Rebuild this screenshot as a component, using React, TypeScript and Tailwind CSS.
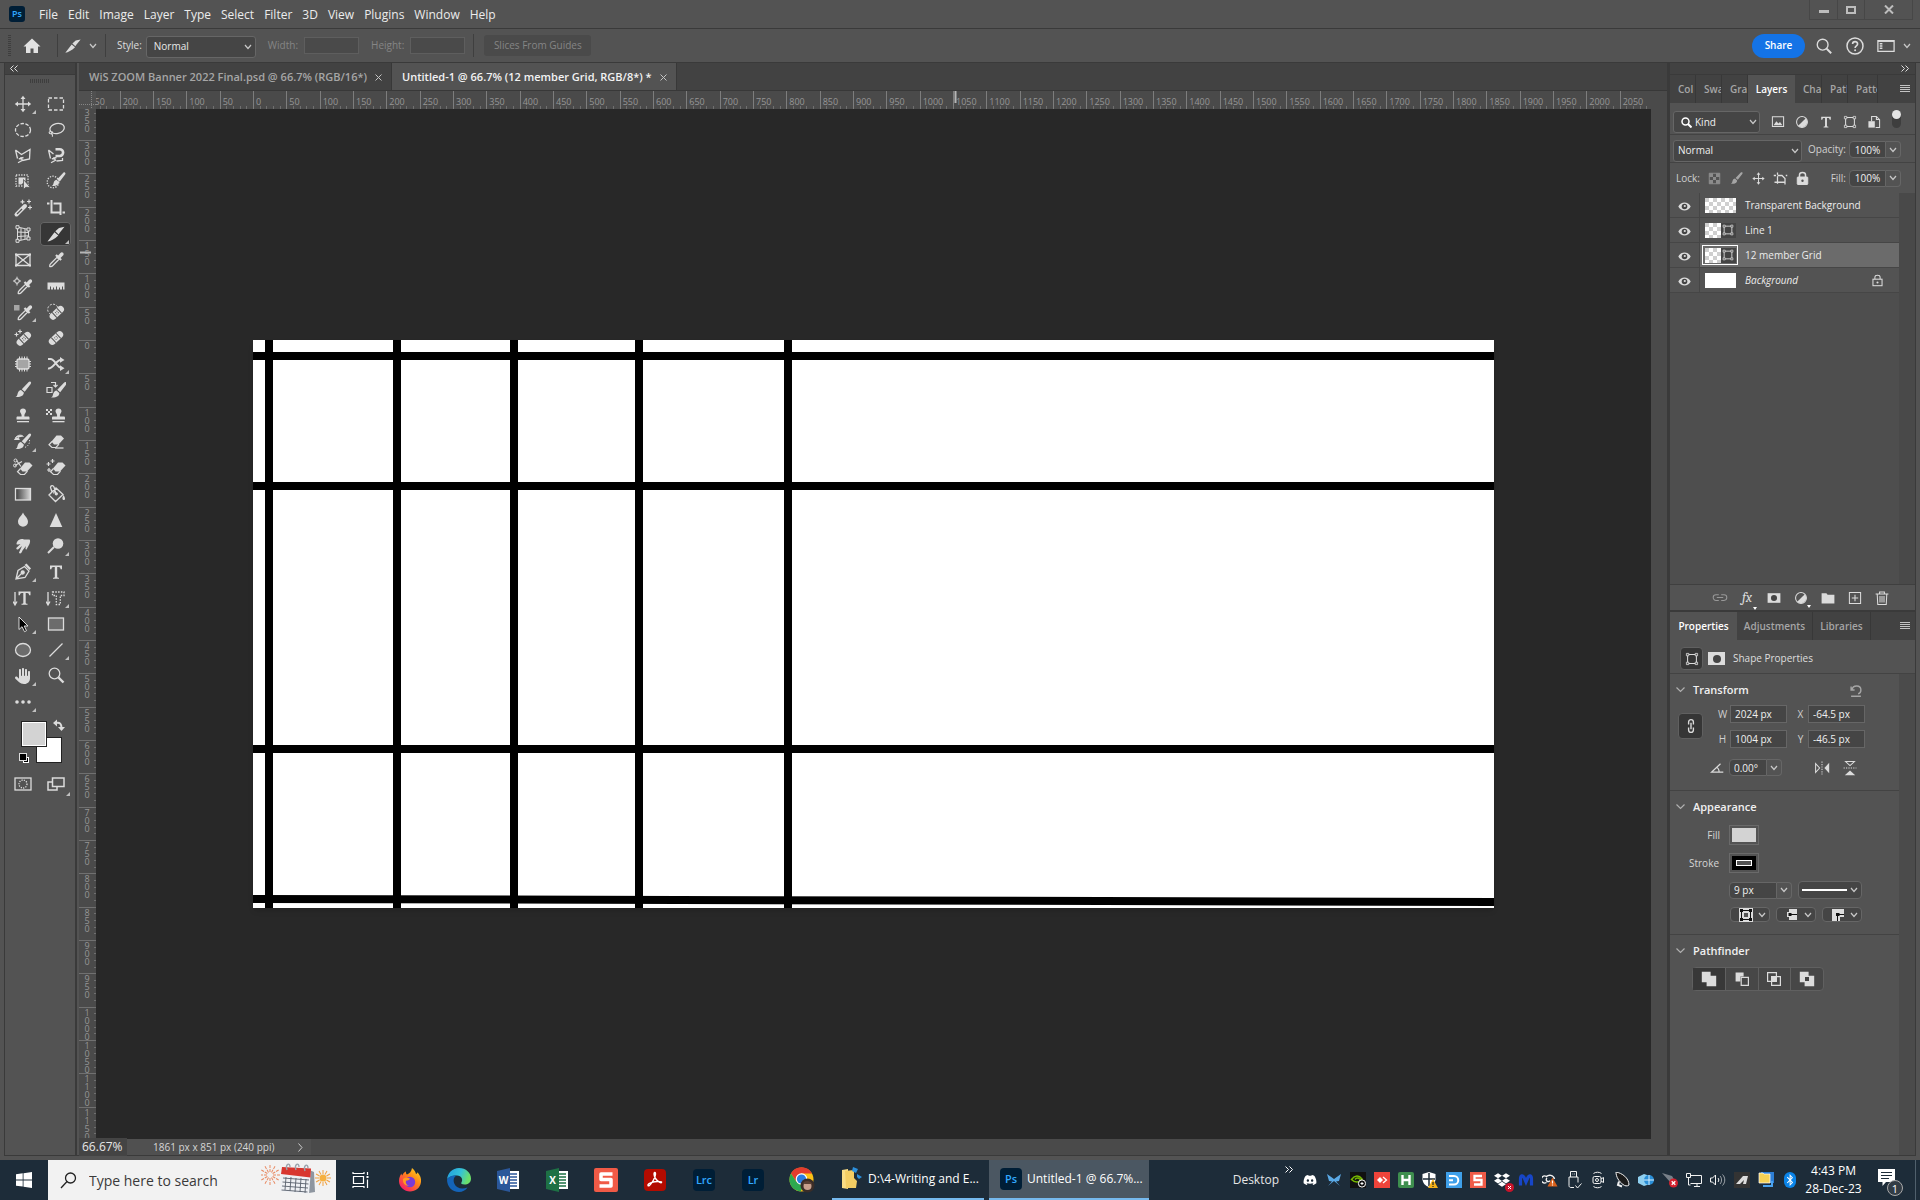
import React from "react";
import { FaBluetoothB, FaDiscord, FaDropbox, FaHand } from "react-icons/fa6";

type Kids = { children?: React.ReactNode };

const C = "#dcdcdc";

function Ic({ children, s = 20, vb = "0 0 20 20" }: Kids & { s?: number; vb?: string }) {
  return (
    <svg width={s} height={s} viewBox={vb} fill="none" stroke={C} strokeWidth="1.3" aria-hidden="true" className="shrink-0">
      {children}
    </svg>
  );
}

function Chev({ className = "" }: { className?: string }) {
  return (
    <svg width="8" height="6" viewBox="0 0 8 6" fill="none" stroke="#c8c8c8" strokeWidth="1.2" className={"shrink-0 " + className} aria-hidden="true">
      <path d="M1 1l3 3.500L7 1" />
    </svg>
  );
}

/* ---------- tool drawings ---------- */

const Brush = () => (
  <g fill={C} stroke="none">
    <path d="M17.500 1.800c.9.6.7 1.400.2 2.200l-6 7.800-2.900-2.500 6.900-7.200c.6-.6 1.200-.7 1.800-.3z" />
    <path d="M8 10l2.800 2.500c.2 3-3 4.900-8.300 4.500 2.200-1 1.700-2.900 2.500-4.600.7-1.400 1.700-2.300 3-2.400z" />
  </g>
);
const Dropper = () => (
  <g>
    <path d="M11 7.300l2 2-6.400 6.400c-.9.9-2.900 1.500-2.900.5s.3-2 .9-2.500z" />
    <path d="M9.200 5.800l1.500-1.500 1.400 1.200 2.300-2.500c1.900-1.800 4.400.6 2.600 2.600l-2.500 2.300 1.400 1.400-1.500 1.500z" fill={C} stroke="none" />
  </g>
);
const Band = () => (
  <g transform="rotate(-43 10 10)">
    <rect x="1.500" y="6.500" width="17" height="7" rx="3.500" fill={C} stroke="none" />
    <path d="M6.800 6.500v7M13.200 6.500v7" stroke="#535353" strokeWidth="1" />
    <path d="M8.700 9h.9M10.700 9h.9M8.700 11h.9M10.700 11h.9" stroke="#535353" strokeWidth="1" />
  </g>
);
const EraserG = () => (
  <g>
    <path d="M10.500 3.500h4.500l3 3-5.500 6h-4.500L5.500 9.500z" fill={C} stroke="none" />
    <path d="M6 9.500l-3 3.300 3 2.700h4l3-3.300" strokeWidth="1.200" />
  </g>
);
const Stamp = () => (
  <g fill={C} stroke="none">
    <path d="M10 2.500c1.900 0 3 1.300 3 2.800 0 1.600-1.600 2.200-1.600 4.200v1h3.800c.9 0 1.300.5 1.300 1.300v1.700h-13v-1.700c0-.8.4-1.300 1.300-1.300h3.800v-1C8.600 7.500 7 6.900 7 5.300c0-1.500 1.100-2.800 3-2.800z" />
    <rect x="4" y="15" width="12" height="1.300" />
  </g>
);
const Tee = ({ x = 0 }: { x?: number }) => (
  <path
    transform={`translate(${x} 0)`}
    d="M4 3.500h12v3.800h-1.400c-.2-1.500-.6-2.200-2-2.200h-1.400v9.600c0 .9.500 1 1.800 1.100v1H7v-1c1.300-.1 1.800-.2 1.800-1.100V5.100H7.400c-1.400 0-1.800.7-2 2.200H4z"
    fill={C}
    stroke="none"
  />
);
const LassoLines = () => <path d="M2.500 4l6 4.500 8.500-5-.5 9.500-7 1.500M2.500 4l2 8.500m3-1.200l2 3-4.500 2.500M5.800 12.800l4.700-1.300" />;
const Sparkle = ({ x, y }: { x: number; y: number }) => <path d={`M${x - 2} ${y}h4M${x} ${y - 2}v4`} strokeWidth="1.200" />;
const Slice = () => (
  <path d="M1.500 17.500L8.500 8.200l3.800 3.200C8.500 15 4.500 17 1.500 17.500zM9.300 7.200l3.700-3.200 5.500-1.200-4.800 5.900-1.100 1.700z" fill={C} stroke="none" />
);
const FrameG = () => (
  <g>
    <path d="M4.500 4.500h11v11h-11z" />
    <path d="M3 3h3v3H3zM14 3h3v3h-3zM3 14h3v3H3zM14 14h3v3h-3z" fill="#535353" strokeWidth="1" />
  </g>
);
const MoveG = () => (
  <g>
    <path d="M10 3v14M3 10h14" />
    <path d="M10 1.800L7.500 5h5zM10 18.200L7.500 15h5zM1.800 10L5 7.500v5zM18.200 10L15 7.500v5z" fill={C} stroke="none" />
  </g>
);

const tools: { n: string; d: React.ReactNode; m?: boolean; on?: boolean }[] = [
  { n: "Move", m: true, d: <MoveG /> },
  { n: "Rectangular Marquee", d: <path d="M2.500 4h15v12h-15z" strokeDasharray="3.500 2" /> },
  { n: "Elliptical Marquee", d: <ellipse cx="10" cy="10" rx="7.500" ry="6.500" strokeDasharray="3.500 1.500" /> },
  { n: "Lasso", d: <g><ellipse cx="11" cy="8.500" rx="7.300" ry="5" transform="rotate(-12 11 8)" /><path d="M4.500 11.500c-1.800 0-1.800 2.200 0 2.300 2 .1 2.600-2 1-2.200M5.500 13.800c1.500 1 1.200 2 .8 3" strokeWidth="1.100" /></g> },
  { n: "Polygonal Lasso", d: <LassoLines /> },
  { n: "Magnetic Lasso", d: <g><path d="M2.500 4l2 8.500m3-1.200l2 3-4.500 2.500M5.800 12.800l4.700-1.300M2.500 4l5 4M16.500 12v2.500l-6 .5" /><path d="M9.500 3.200h4.200a3.400 3.400 0 010 6.800H9.500" strokeWidth="2.600" /></g> },
  { n: "Object Selection", d: <g><path d="M3 3h12v11H3z" strokeDasharray="1.300 1.300" /><path d="M5.500 5.500h7v3l-4 4h-3z" fill={C} stroke="none" /><path d="M10.500 7.500v10l2.300-2.200 4.500.2z" fill={C} stroke="#535353" strokeWidth=".8" /></g> },
  { n: "Quick Selection", d: <g><circle cx="7" cy="10" r="5.800" strokeDasharray="1.300 1.300" /><g transform="translate(3.500 -1) scale(.88)"><Brush /></g></g> },
  { n: "Magic Wand", d: <g><path d="M3.500 16.500L12 8" strokeWidth="4" strokeLinecap="round" /><path d="M4 16l5-5" stroke="#535353" strokeWidth="1.300" /><Sparkle x={9.5} y={3.8} /><Sparkle x={16} y={3.5} /><Sparkle x={17} y={9.5} /></g> },
  { n: "Crop", d: <path d="M1 5.500h2.500M5.500 2v12.500H15M7.500 5.500h7V17M16.500 14.500H19" strokeWidth="2" /> },
  { n: "Perspective Crop", d: <g><path d="M4.500 3l11 2.500v9l-11 2.500zM8 4v12M12 5v10M4.500 8l11 .5M4.500 12.500l11-.7" strokeWidth="1" /><path d="M3 1.700h3v3H3zM14 4h3v3h-3zM3 15.300h3v3H3zM14 13h3v3h-3z" fill="#535353" strokeWidth="1" /></g> },
  { n: "Slice", m: true, on: true, d: <Slice /> },
  { n: "Frame", d: <g><path d="M3 4.500h14v11H3zM3 4.500l14 11M17 4.500l-14 11" /><path d="M2 3.500h2v2H2zM16 3.500h2v2h-2zM2 14.500h2v2H2zM16 14.500h2v2h-2z" fill={C} stroke="none" /></g> },
  { n: "Eyedropper", d: <Dropper /> },
  { n: "3D Material Eyedropper", d: <g><g transform="translate(1.500 1)"><Dropper /></g><circle cx="4" cy="5" r="2.300" strokeWidth="1" /><path d="M4 .7v3M4 6.500v3M0 5h2.500M5.500 5H8" strokeWidth="1" /></g> },
  { n: "Ruler", d: <path d="M1.500 6.500h17v7h-1.500v-3h-1v3h-2v-2h-1v2h-2v-3h-1v3H8v-2H7v2H5v-3H4v3H1.500z" fill={C} stroke="none" /> },
  { n: "Color Sampler", m: true, d: <g><g transform="translate(1.500 1)"><Dropper /></g><rect x="1" y="3" width="5.500" height="5.500" fill="#a5a5a5" stroke="none" /></g> },
  { n: "Spot Healing Brush", d: <g><circle cx="7" cy="7.500" r="5.300" strokeDasharray="2 1.500" strokeWidth="1" /><g transform="translate(.8 .8)"><Band /></g></g> },
  { n: "Healing Brush", d: <g><g transform="translate(.8 .8)"><Band /></g><Sparkle x={7} y={3.5} /><Sparkle x={3.5} y={6.5} /></g> },
  { n: "Bandage", d: <Band /> },
  { n: "Patch", d: <g><rect x="4" y="5" width="12" height="10" rx="2" fill="#a5a5a5" /><path d="M6.500 2.500v3M9 2.500v3M11.500 2.500v3M14 2.500v3M6.500 14.500v3M9 14.500v3M11.500 14.500v3M14 14.500v3M2 7.500h2M2 10h2M2 12.500h2M16 7.500h2M16 10h2M16 12.500h2" strokeWidth="1" /></g> },
  { n: "Content-Aware Move", m: true, d: <g><path d="M2 5h2.500c4.500 0 6.500 9 11 9h.5M2 14.500c5 1 8-8.500 12.500-8.500" strokeWidth="2" /><path d="M14 3l4.500 3-4.500 2.800zM14 11.200l4.500 3-4.500 2.800z" fill={C} stroke="none" /></g> },
  { n: "Brush", d: <Brush /> },
  { n: "Color Replacement", d: <g><g transform="translate(2.500 .5)"><Brush /></g><path d="M1 7.500h5v5H1zM5 2.500h4.500v4M7.500 5l2 2 2-2" strokeWidth="1.200" /></g> },
  { n: "Clone Stamp", d: <Stamp /> },
  { n: "Pattern Stamp", d: <g><g transform="translate(2.500 0)"><Stamp /></g><path d="M0 3h2v2H0zM4 3h2v2H4zM2 5h2v2H2zM0 7h2v2H0zM4 7h2v2H4z" fill={C} stroke="none" /></g> },
  { n: "History Brush", m: true, d: <g><Brush /><path d="M2.500 6c2-3.500 6-3.500 8-1.500M1.500 7.500h4.800l-2-3.500z" fill={C} strokeWidth="1" /><path d="M16.500 8c.5 3.500-1.500 6.500-5 7.500" strokeDasharray="1.200 1.500" strokeWidth="1" /></g> },
  { n: "Eraser", d: <g><EraserG /><path d="M9 16h8.500" /></g> },
  { n: "Background Eraser", d: <g><g transform="translate(1.500 1)"><EraserG /></g><path d="M2 7.500l7-4M3.500 2.500l4.500 6" strokeWidth="1.200" /><circle cx="2.500" cy="2.500" r="1.500" strokeWidth="1" /><circle cx="2" cy="7.500" r="1.500" strokeWidth="1" /></g> },
  { n: "Magic Eraser", d: <g><g transform="translate(1.500 1)"><EraserG /></g><Sparkle x={6.5} y={3} /><Sparkle x={2.5} y={6} /><Sparkle x={3} y={12} /></g> },
  { n: "Gradient", d: <g><defs><linearGradient id="grad"><stop stopColor="#3c3c3c" /><stop offset="1" stopColor="#d8d8d8" /></linearGradient></defs><rect x="2.500" y="4.500" width="15" height="11.500" fill="url(#grad)" /></g> },
  { n: "Paint Bucket", d: <g><path d="M3 11l7-7 7 6.500-7.500 7zM6 8L4.500 3.500c0-2 2.500-2.500 3.500-.5l2 7M10 4L7.500 9.500" /><circle cx="10.300" cy="9.800" r="1" fill={C} /><path d="M17.500 11c2.500 4 1.500 5 .2 5s-2-1.500-.2-5z" fill={C} stroke="none" /></g> },
  { n: "Blur", d: <path d="M10 2.500c1.500 3.500 5 5.500 5 9.300a5 5 0 01-10 0C5 8 8.500 6 10 2.500z" fill={C} stroke="none" /> },
  { n: "Sharpen", d: <path d="M10 3l6.300 14H3.700z" fill={C} stroke="none" /> },
  { n: "Smudge", d: <path d="M4 6c2-3 4.500-3.500 7-2.500h5.500c1 .8.600 3 0 4.500l-3 5.500c-1.500.5-1-2-.5-3.500l-3.500 4.500c-1 3.500-3 3.500-3.500 2l3-6.500-4 3.500c-1.500.3-2-.7-1.500-1.700l4-3.800-2.500.5c-1.500.2-2-.500-1-2.500z" fill={C} stroke="none" /> },
  { n: "Dodge", m: true, d: <g><circle cx="12" cy="7.500" r="5.300" fill={C} stroke="none" /><path d="M2 17l6-6" strokeWidth="2" /></g> },
  { n: "Pen", m: true, d: <g><path d="M3 17l2-8.500 6.500-4 4.500 4.500-4 6.500zM3 17l5.500-5.500" /><circle cx="9.700" cy="10.500" r="1.500" fill={C} /><path d="M11.500 3l2-1.500 4.500 5L16.500 8z" fill={C} stroke="none" /></g> },
  { n: "Horizontal Type", d: <Tee /> },
  { n: "Vertical Type", d: <g><Tee x={1.5} /><path d="M2 4v12M0 13.500L2 17l2-3.500" /></g> },
  { n: "Vertical Type Mask", m: true, d: <g><path d="M6.500 4h11.500v3.500h-3.700v9h-4v-9H6.500z" strokeDasharray="1.500 1.300" /><path d="M2 4v12M0 13.500L2 17l2-3.500" /></g> },
  { n: "Path Selection", m: true, d: <path d="M6 3v12.500l3-2.800 2.500 5 2-1-2.300-4.700H15z" fill="#000" strokeWidth="1" /> },
  { n: "Rectangle", d: <rect x="2.500" y="4" width="15" height="12" fill="#6c6c6c" /> },
  { n: "Ellipse", d: <ellipse cx="10" cy="10" rx="7.500" ry="6.500" fill="#6c6c6c" /> },
  { n: "Line", m: true, d: <path d="M3.500 16.500l13-13" /> },
  { n: "Hand", m: true, d: <FaHand x="2" y="2" width="16" height="16" color={C} stroke="none" fill={C} /> },
  { n: "Zoom", d: <g><circle cx="8.500" cy="7.500" r="5.300" /><path d="M12.500 11.500l5 5" strokeWidth="2.400" /></g> },
  { n: "Edit Toolbar", m: true, d: <g fill={C} stroke="none"><circle cx="4" cy="10" r="1.800" /><circle cx="10" cy="10" r="1.800" /><circle cx="16" cy="10" r="1.800" /></g> },
];

function Toolbar() {
  return (
    <aside className="flex w-[72px] shrink-0 flex-col border-r-2 border-[#3a3a3a] bg-[#535353]">
      <div className="flex h-[11px] items-center bg-[#424242] pl-[5px]">
        <svg width="8" height="7" viewBox="0 0 8 7" fill="none" stroke="#ddd" aria-hidden="true"><path d="M3.500.5l-3 3 3 3M7.500.5l-3 3 3 3" /></svg>
      </div>
      <div className="flex h-[17px] items-start justify-center border-t border-[#3a3a3a] pt-1">
        <svg width="20" height="4" aria-hidden="true"><path d="M0 2h20" stroke="#3e3e3e" strokeWidth="4" strokeDasharray="1 1" /></svg>
      </div>
      <div className="grid grid-cols-[33px_33px] pl-px">
        {tools.map((t) => (
          <button
            key={t.n}
            aria-label={t.n}
            className={"relative m-px flex h-6 w-[31px] items-center justify-center rounded-sm " + (t.on ? "bg-[#363636] ring-1 ring-[#656565] ring-inset" : "")}
          >
            <Ic>{t.d}</Ic>
            {t.m && <svg width="4" height="4" className="absolute right-0.5 bottom-0.5" aria-hidden="true"><path d="M4 0v4H0z" fill="#c0c0c0" /></svg>}
          </button>
        ))}
      </div>
      <svg width="48" height="50" viewBox="0 0 48 50" className="mt-1 ml-4 overflow-visible" role="img" aria-label="Foreground and background colors">
        <rect x="15.500" y="18.500" width="25" height="25" fill="#fff" stroke="#222" />
        <rect x=".5" y="2.500" width="25" height="25" fill="#222" stroke="#222" />
        <rect x="1.500" y="3.500" width="23" height="23" fill="#d3d3d3" stroke="#fff" />
        <path d="M35 4c4-1 5.500 1 5.500 5" fill="none" stroke={C} strokeWidth="2" />
        <path d="M36 .5v7L32 4zM37 8h7l-3.500 4z" fill={C} />
        <rect x="2.500" y="38.500" width="5" height="5" fill="#000" stroke="#fff" />
        <rect x="-1.500" y="34.500" width="7" height="7" fill="#000" stroke="#ddd" />
      </svg>
      <div className="mt-[3px] grid grid-cols-[33px_33px] pl-px">
        <button aria-label="Quick Mask" className="flex h-6 items-center justify-center">
          <Ic><rect x="2" y="4" width="16" height="12" /><circle cx="10" cy="10" r="4" strokeDasharray="1.200 1.200" /></Ic>
        </button>
        <button aria-label="Screen Mode" className="relative flex h-6 items-center justify-center">
          <Ic><path d="M6.500 4h11.500v8.500H6.500zM6.500 8H2v8h9v-3.500" strokeWidth="1.500" /></Ic>
          <svg width="4" height="4" className="absolute right-0.5 bottom-0" aria-hidden="true"><path d="M4 0v4H0z" fill="#c0c0c0" /></svg>
        </button>
      </div>
    </aside>
  );
}

/* ---------- top bars ---------- */

const menus = ["File", "Edit", "Image", "Layer", "Type", "Select", "Filter", "3D", "View", "Plugins", "Window", "Help"];

function MenuBar() {
  return (
    <header className="flex h-[29px] shrink-0 items-center border-b border-[#3a3a3a] bg-[#535353] pl-[9px] text-[12px] text-[#ececec]">
      <span className="mr-[9px] flex size-4 items-center justify-center rounded-[3px] bg-[#001e36] text-[9px] font-semibold text-[#31a8ff]">Ps</span>
      <nav className="flex pt-0.5">
        {menus.map((m) => (
          <button key={m} className="px-[5px]">{m}</button>
        ))}
      </nav>
      <div className="mr-[7px] ml-auto flex h-5 self-start border border-t-0 border-[#474747]">
        <button aria-label="Minimize" className="flex w-7 items-center justify-center border-r border-[#474747]"><span className="mt-1 h-[3px] w-[10px] bg-[#bdbdbd]" /></button>
        <button aria-label="Restore" className="flex w-[27px] items-center justify-center border-r border-[#474747]"><span className="h-2 w-[10px] border-2 border-[#bdbdbd]" /></button>
        <button aria-label="Close" className="flex w-[47px] items-center justify-center">
          <svg width="10" height="9" viewBox="0 0 10 9" stroke="#bdbdbd" strokeWidth="2" aria-hidden="true"><path d="M1 .5l8 8M9 .5l-8 8" /></svg>
        </button>
      </div>
    </header>
  );
}

function OptionsBar() {
  return (
    <div className="flex h-[34px] shrink-0 items-center border-b border-[#3a3a3a] bg-[#535353] pl-2 text-[10px] text-[#dedede]">
      <svg width="3" height="22" aria-hidden="true"><path d="M1.500 0v22" stroke="#3e3e3e" strokeWidth="3" strokeDasharray="1 1" /></svg>
      <button aria-label="Home" className="mr-4 ml-3">
        <svg width="18" height="16" viewBox="0 0 18 16" fill="#e2e2e2" className="block" aria-hidden="true"><path d="M9 .5L.5 8.500H3V15h4.500v-4.500h3V15H15V8.500h2.500z" /></svg>
      </button>
      <div className="h-[23px] w-px bg-[#3f3f3f]" />
      <button aria-label="Slice tool presets" className="ml-1.5 flex items-center gap-[7px]"><Ic s={18}><Slice /></Ic><Chev /></button>
      <div className="ml-2 h-[23px] w-px bg-[#3f3f3f]" />
      <label className="ml-[11px]" htmlFor="style">Style:</label>
      <div className="relative mt-0.5 ml-1">
        <select id="style" className="block h-[22px] w-[110px] appearance-none rounded-[3px] border border-[#666] bg-[#454545] pl-[7px] text-[10px] text-[#e8e8e8]"><option>Normal</option></select>
        <Chev className="absolute top-2 right-1" />
      </div>
      <label className="ml-3 text-[#858585]" htmlFor="w">Width:</label>
      <input id="w" disabled className="ml-1.5 h-[17px] w-[55px] border border-[#5e5e5e] bg-[#4a4a4a]" />
      <label className="ml-3 text-[#858585]" htmlFor="h">Height:</label>
      <input id="h" disabled className="ml-1.5 h-[17px] w-[55px] border border-[#5e5e5e] bg-[#4a4a4a]" />
      <div className="ml-2 h-[23px] w-px bg-[#3f3f3f]" />
      <button disabled className="ml-[10px] h-[21px] w-[107px] rounded-[3px] bg-[#4a4a4a] text-[#858585]">Slices From Guides</button>
      <div className="ml-auto flex items-center pr-[9px]">
        <button className="h-6 w-[53px] rounded-full bg-[#1473e6] text-[10px] font-semibold text-white">Share</button>
        <button aria-label="Search" className="ml-[10px]"><Ic s={18}><circle cx="8.500" cy="8.500" r="6" strokeWidth="1.500" /><path d="M13 13l5 5" strokeWidth="2.200" /></Ic></button>
        <button aria-label="Help" className="ml-3"><Ic s={20}><circle cx="10" cy="10" r="8" strokeWidth="1.500" /><path d="M7.600 8c0-3.200 5-3.200 5 0 0 1.800-2.500 1.900-2.500 4" strokeWidth="1.600" /><circle cx="10.100" cy="14.200" r="1" fill={C} stroke="none" /></Ic></button>
        <button aria-label="Workspace" className="ml-3 flex items-center gap-2"><Ic s={18}><path d="M1 4h18v12H1z" strokeWidth="1.400" /><path d="M1 4.500h18" strokeWidth="2" /><path d="M3 7.500h3M3 10h3M3 12.500h3" strokeWidth="1.600" /></Ic><Chev /></button>
      </div>
    </div>
  );
}

/* ---------- document ---------- */

const UNIT = 100 / 3;

function HRuler() {
  const majors = Array.from({ length: 47 }, (_, i) => i - 5);
  return (
    <svg className="h-[18px] min-w-0 flex-1" aria-label="Horizontal ruler">
      {majors.map((i) => {
        const x = 157 + i * UNIT;
        return (
          <g key={i}>
            <path d={`M${Math.round(x) + 0.5} 0v18`} stroke="#7d7d7d" />
            {[1, 2, 3, 4].map((k) => (
              <path key={k} d={`M${Math.round(x + (k * UNIT) / 5) + 0.5} 15v3`} stroke="#6f6f6f" />
            ))}
            <text x={x + 3} y="14" fill="#969696" fontSize="9">{Math.abs(i * 50)}</text>
          </g>
        );
      })}
      <path d="M859.500 0v12" stroke="#b5b5b5" strokeWidth="2" />
    </svg>
  );
}

function VRuler() {
  const majors = Array.from({ length: 31 }, (_, i) => i - 7);
  return (
    <svg className="h-full w-[17px] shrink-0 bg-[#4a4a4a]" aria-label="Vertical ruler">
      {majors.map((i) => {
        const y = 231 + i * UNIT;
        return (
          <g key={i}>
            <path d={`M0 ${Math.round(y) + 0.5}h17`} stroke="#707070" />
            {[1, 2, 3, 4].map((k) => (
              <path key={k} d={`M15 ${Math.round(y + (k * UNIT) / 5) + 0.5}h2`} stroke="#6f6f6f" />
            ))}
            {String(Math.abs(i * 50)).split("").map((ch, k) => (
              <text key={k} x="8" y={y + 9 + k * 8} textAnchor="middle" fill="#969696" fontSize="9">{ch}</text>
            ))}
          </g>
        );
      })}
      <path d="M1 143.500h11" stroke="#b5b5b5" strokeWidth="2" />
    </svg>
  );
}

function GridArt() {
  return (
    <svg width="1241" height="568" viewBox="0 0 1241 568" role="img" aria-label="12 member grid" className="shrink-0 shadow-md">
      <rect width="1241" height="568" fill="#fff" />
      {[12, 140, 257, 382, 531].map((x) => (
        <rect key={x} x={x} width="8" height="568" />
      ))}
      {[12, 142, 405].map((y) => (
        <rect key={y} y={y} width="1241" height="8" />
      ))}
      <path d="M0 555l1241 3v8L0 563z" />
    </svg>
  );
}

function Tab({ title, active }: { title: string; active?: boolean }) {
  return (
    <div className={"flex items-center border-r border-[#383838] pt-0.5 pr-[9px] pl-[10px] text-[11px] font-semibold whitespace-nowrap " + (active ? "bg-[#535353] text-[#f2f2f2]" : "text-[#a6a6a6]")}>
      <button role="tab" aria-selected={!!active}>{title}</button>
      <button aria-label={"Close " + title} className="ml-2">
        <svg width="7" height="7" viewBox="0 0 7 7" stroke="#c4c4c4" className="block" aria-hidden="true"><path d="M.5.5l6 6M6.500.5l-6 6" /></svg>
      </button>
    </div>
  );
}

function Workspace() {
  return (
    <main className="flex min-w-0 flex-1 flex-col pl-0.5">
      <div role="tablist" className="flex h-7 shrink-0 border-b border-[#383838] bg-[#424242]">
        <Tab title="WiS ZOOM Banner 2022 Final.psd @ 66.7% (RGB/16*)" />
        <Tab title="Untitled-1 @ 66.7% (12 member Grid, RGB/8*) *" active />
      </div>
      <div className="flex h-[18px] shrink-0 bg-[#4a4a4a]">
        <svg width="17" height="18" aria-hidden="true" className="shrink-0 bg-[#505050]"><path d="M12.500 0v18M0 13.500h17" stroke="#858585" strokeDasharray="1 1" /></svg>
        <HRuler />
      </div>
      <div className="flex min-h-0 flex-1">
        <VRuler />
        <div className="flex min-w-0 flex-1 items-center justify-center overflow-hidden bg-[#282828]"><GridArt /></div>
        <div className="w-4 shrink-0 bg-[#4a4a4a]" />
      </div>
      <div className="flex h-4 shrink-0 items-center bg-[#4a4a4a] text-[10px] text-[#d6d6d6]">
        <span className="w-12 bg-[#444] pl-[3px] text-[12px] leading-[18px] text-[#e8e8e8]">66.67%</span>
        <span className="flex h-4 flex-1 grow-0 basis-[184px] items-center justify-between bg-[#505050] pt-px pr-2 pl-[26px] whitespace-nowrap">
          1861 px x 851 px (240 ppi)
          <svg width="5" height="9" viewBox="0 0 5 9" fill="none" stroke="#ccc" aria-hidden="true"><path d="M.5.5l3.500 4-3.500 4" /></svg>
        </span>
      </div>
    </main>
  );
}

/* ---------- right panels ---------- */

const Burger = () => (
  <svg width="10" height="8" stroke="#c4c4c4" aria-hidden="true"><path d="M0 .5h10M0 2.500h10M0 4.500h10M0 6.500h10" /></svg>
);

const Half = () => (
  <g><circle cx="10" cy="10" r="6.800" /><path d="M14.800 5.200A6.800 6.800 0 015.200 14.800z" fill={C} stroke="none" /></g>
);

const Checker = ({ w }: { w: number }) => (
  <svg width={w} height="15" className="bg-white" aria-hidden="true">
    <defs><pattern id="chk" width="8" height="8" patternUnits="userSpaceOnUse"><path d="M0 0h4v4H0zM4 4h4v4H4z" fill="#cfcfcf" /></pattern></defs>
    <rect width={w} height="15" fill="url(#chk)" />
  </svg>
);

const layers = [
  { n: "Transparent Background", k: "clear" },
  { n: "Line 1", k: "shape" },
  { n: "12 member Grid", k: "shape", on: true },
  { n: "Background", k: "white" },
];

function NumberBox({ label, value, id }: { label: string; value: string; id: string }) {
  return (
    <div className="flex items-center">
      <label htmlFor={id} className="mr-[3px] text-[#d0d0d0]">{label}</label>
      <input id={id} defaultValue={value} className="h-[17px] w-[37px] rounded-l-sm border border-[#666] bg-[#454545] text-center text-[#f0f0f0]" />
      <button aria-label={label + " slider"} className="flex h-[17px] w-[15px] items-center justify-center rounded-r-sm border border-l-0 border-[#666]"><Chev /></button>
    </div>
  );
}

const hiddenTab = "overflow-hidden border-r border-[#383838] pl-2 text-left ";

function LayersPanel() {
  return (
    <section className="flex h-[536px] shrink-0 flex-col text-[10px]">
      <div role="tablist" className="flex h-[29px] border-t border-[#3a3a3a] bg-[#424242] font-semibold text-[#a6a6a6]">
        <button role="tab" aria-label="Color" aria-selected="false" className={hiddenTab + "w-[26px]"}>Col</button>
        <button role="tab" aria-label="Swatches" aria-selected="false" className={hiddenTab + "w-[26px]"}>Swa</button>
        <button role="tab" aria-label="Gradients" aria-selected="false" className={hiddenTab + "w-[26px]"}>Gra</button>
        <button role="tab" aria-selected="true" className="w-[47px] bg-[#535353] text-white">Layers</button>
        <button role="tab" aria-label="Channels" aria-selected="false" className={hiddenTab + "w-[27px]"}>Cha</button>
        <button role="tab" aria-label="Paths" aria-selected="false" className={hiddenTab + "w-[26px]"}>Path</button>
        <button role="tab" aria-label="Patterns" aria-selected="false" className={hiddenTab + "w-[30px]"}>Patte</button>
        <button aria-label="Panel menu" className="mr-[5px] ml-auto"><Burger /></button>
      </div>
      <div className="flex h-8 items-end border-b border-[#434343] pb-px pl-[3px]">
        <div className="relative">
          <select aria-label="Filter by kind" className="block h-[22px] w-[87px] appearance-none rounded-[3px] border border-[#666] bg-[#454545] pl-[21px] text-[10px] text-[#f0f0f0]"><option>Kind</option></select>
          <svg width="11" height="11" viewBox="0 0 11 11" fill="none" stroke="#fff" strokeWidth="1.500" className="absolute top-1.5 left-2" aria-hidden="true"><circle cx="4.500" cy="4.500" r="3.500" /><path d="M7 7l3.500 3.500" strokeWidth="2" /></svg>
          <Chev className="absolute top-2 right-[3px]" />
        </div>
        <div className="mb-[3px] ml-[10px] flex items-center gap-2">
          <button aria-label="Pixel layers"><Ic s={16}><path d="M3 3.500h14v12H3z" /><path d="M4.500 14l3.500-5 2.500 3 2-2 3 4z" fill={C} stroke="none" /></Ic></button>
          <button aria-label="Adjustment layers"><Ic s={16}><Half /></Ic></button>
          <button aria-label="Type layers"><Ic s={16}><Tee /></Ic></button>
          <button aria-label="Shape layers"><Ic s={16}><FrameG /></Ic></button>
          <button aria-label="Smart objects"><Ic s={16}><path d="M7 9V3h6l4 4v10h-5M13 3v4h4" /><path d="M3 9h8v8H3z" fill={C} stroke="none" /></Ic></button>
          <button aria-label="Filter on" className="-mt-1.5 ml-0.5 flex h-[18px] w-[9px] items-start rounded-full bg-[#3e3e3e]"><span className="size-[9px] rounded-full bg-[#e4e4e4]" /></button>
        </div>
      </div>
      <div className="flex h-7 items-center border-b border-[#434343] pl-[3px]">
        <div className="relative mt-1 mr-auto">
          <select aria-label="Blend mode" className="block h-[22px] w-[129px] appearance-none rounded-[3px] border border-[#666] bg-[#454545] pl-1 text-[10px] text-[#f0f0f0]"><option>Normal</option></select>
          <Chev className="absolute top-2 right-[3px]" />
        </div>
        <div className="mt-0.5 mr-[14px]"><NumberBox id="opacity" label="Opacity:" value="100%" /></div>
      </div>
      <div className="flex h-[30px] items-center pl-1.5 text-[#d0d0d0]">
        <span>Lock:</span>
        <div className="ml-[7px] flex items-center gap-[7px]">
          <button aria-label="Lock transparency"><Ic s={15}><path d="M3 3h14v14H3z" stroke="#8c8c8c" /><path d="M3 3h5v5H3zM12 3h5v5h-5zM8 8h4v4H8zM3 12h5v5H3zM12 12h5v5h-5z" fill="#8c8c8c" stroke="none" /></Ic></button>
          <button aria-label="Lock pixels" className="opacity-60"><Ic s={15}><Brush /></Ic></button>
          <button aria-label="Lock position"><Ic s={15}><MoveG /></Ic></button>
          <button aria-label="Lock artboard"><Ic s={15}><path d="M1 6h3M6 2v3M6 7v10M2 15h14M6 6h6l4 4v8M17 6h2" strokeWidth="1.700" /></Ic></button>
          <button aria-label="Lock all"><Ic s={15}><rect x="3" y="8" width="14" height="10" rx="1" fill={C} /><path d="M6 8V5c0-4 8-4 8 0v3" strokeWidth="2" /><circle cx="10" cy="13" r="1.600" fill="#535353" stroke="none" /></Ic></button>
        </div>
        <div className="mr-[14px] ml-auto"><NumberBox id="fillop" label="Fill:" value="100%" /></div>
      </div>
      <div className="flex min-h-0 flex-1 bg-[#4e4e4e]">
        <ul className="min-w-0 flex-1">
          {layers.map((l) => (
            <li key={l.n} className="flex h-[25px] border-b border-[#464646] bg-[#535353]">
              <button aria-label={"Toggle " + l.n} className="flex w-[30px] items-center justify-center border-r border-[#464646] pt-0.5">
                <svg width="13" height="9" viewBox="0 0 13 9" aria-hidden="true"><path d="M.3 4.500C3-.8 10-.8 12.700 4.500 10 9.800 3 9.800.3 4.500z" fill={C} /><circle cx="6.500" cy="4.500" r="2.800" fill="#444" /><circle cx="6.800" cy="4" r="1.100" fill={C} /></svg>
              </button>
              <button className={"flex min-w-0 flex-1 items-center pr-[15px] pl-[2px] text-[#ececec] " + (l.on ? "bg-[#6b6b6b]" : "")}>
                <span className={"flex h-5 w-9 shrink-0 items-center justify-center " + (l.on ? "border border-white" : "")}>
                  {l.k === "clear" && <Checker w={31} />}
                  {l.k === "white" && <span className="h-[15px] w-[31px] bg-white" />}
                  {l.k === "shape" && (
                    <>
                      <Checker w={16} />
                      <span className="flex h-[15px] w-[15px] items-center justify-center bg-[#444]"><Ic s={14}><FrameG /></Ic></span>
                    </>
                  )}
                </span>
                <span className={"ml-[7px] whitespace-nowrap " + (l.k === "white" ? "italic" : "")}>{l.n}</span>
                {l.k === "white" && <span className="ml-auto"><Ic s={13}><rect x="3" y="8" width="14" height="10" strokeWidth="1.600" /><path d="M6 8V5c0-4 8-4 8 0v3" strokeWidth="1.600" /><circle cx="10" cy="13" r="1.600" fill={C} stroke="none" /></Ic></span>}
              </button>
            </li>
          ))}
        </ul>
        <div className="w-4 bg-[#494949]" />
      </div>
      <div className="flex h-[26px] items-center justify-end gap-[11px] border-t border-[#3f3f3f] bg-[#535353] pr-[25px]">
        <button aria-label="Link layers" className="opacity-50"><Ic s={16}><path d="M8.500 13H5a3.500 3.500 0 010-7h3.500M11.500 6H15a3.500 3.500 0 010 7h-3.500M6 9.500h8" /></Ic></button>
        <button aria-label="Layer style" className="relative w-4 font-serif text-[14px] leading-4 text-[#dcdcdc] italic">
          fx
          <svg width="4" height="3" className="absolute -right-0.5 -bottom-1" aria-hidden="true"><path d="M0 0h4L2 3z" fill="#fff" /></svg>
        </button>
        <button aria-label="Add mask"><Ic s={16}><rect x="2" y="4" width="16" height="12" fill={C} stroke="none" /><circle cx="10" cy="10" r="3.800" fill="#444" stroke="none" /></Ic></button>
        <button aria-label="New adjustment" className="relative">
          <Ic s={16}><Half /></Ic>
          <svg width="4" height="3" className="absolute -right-0.5 -bottom-0.5" aria-hidden="true"><path d="M0 0h4L2 3z" fill="#fff" /></svg>
        </button>
        <button aria-label="New group"><Ic s={16}><path d="M2 4h6l1.500 2H18v11H2z" fill={C} stroke="none" /></Ic></button>
        <button aria-label="New layer"><Ic s={16}><path d="M3 3h14v14H3zM10 6v8M6 10h8" /></Ic></button>
        <button aria-label="Delete layer"><Ic s={16}><path d="M2 5h16M7 5V2.500h6V5M4 5l.7 13h10.600L16 5M7.500 7.500v8M10 7.500v8M12.500 7.500v8" /></Ic></button>
      </div>
    </section>
  );
}

function Heading({ children }: Kids) {
  return (
    <button className="flex items-center gap-2 text-[11px] font-semibold text-[#f0f0f0]">
      <svg width="9" height="6" viewBox="0 0 9 6" fill="none" stroke="#b0b0b0" strokeWidth="1.200" aria-hidden="true"><path d="M.5.5l4 4 4-4" /></svg>
      {children}
    </button>
  );
}

function Field({ id, label, value }: { id: string; label: string; value: string }) {
  return (
    <div className="flex items-center">
      <label htmlFor={id} className="w-[15px] text-center text-[#cfcfcf]">{label}</label>
      <input id={id} defaultValue={value} className="h-[18px] w-[57px] border border-[#666] bg-[#454545] pl-1 text-[#f0f0f0]" />
    </div>
  );
}

function PropertiesPanel() {
  return (
    <section className="flex min-h-0 flex-1 flex-col border-t-2 border-[#3a3a3a] bg-[#535353] text-[10px]">
      <div role="tablist" className="flex h-7 shrink-0 bg-[#424242] font-semibold text-[#a6a6a6]">
        <button role="tab" aria-selected="true" className="w-[67px] bg-[#535353] text-white">Properties</button>
        <button role="tab" aria-selected="false" className="w-[76px] border-r border-[#383838]">Adjustments</button>
        <button role="tab" aria-selected="false" className="w-[58px] border-r border-[#383838]">Libraries</button>
        <button aria-label="Panel menu" className="mr-[5px] ml-auto"><Burger /></button>
      </div>
      <div className="flex h-[34px] shrink-0 items-center border-b border-[#434343] pt-1 pl-[10px] text-[#dedede]">
        <span className="flex size-[23px] items-center justify-center rounded-sm border border-[#606060] bg-[#363636]"><Ic s={16}><FrameG /></Ic></span>
        <span className="ml-[5px] flex h-[13px] w-[17px] items-center justify-center bg-[#dcdcdc]"><span className="size-2 rounded-full bg-[#444]" /></span>
        <span className="ml-2">Shape Properties</span>
      </div>
      <div className="flex min-h-0 flex-1">
        <div className="min-w-0 flex-1">
          <div className="h-[117px] border-b border-[#434343] pt-2 pl-1.5">
            <div className="flex h-4 items-center justify-between pr-9">
              <Heading>Transform</Heading>
              <button aria-label="Reset transform" className="opacity-60"><Ic s={14}><path d="M3 5v5h5M4 10c2-8 13-7 13 0 0 3-2 5-4 5.500M3 19h14" strokeWidth="2" /></Ic></button>
            </div>
            <div className="mt-[7px] flex">
              <button aria-label="Link width and height" className="mt-2 mr-3 ml-[2px] flex h-[26px] w-[25px] items-center justify-center rounded-sm border border-[#606060] bg-[#363636]">
                <Ic s={16}><path d="M7 8V5c0-4 6-4 6 0v3M7 12v3c0 4 6 4 6 0v-3M10 6v8" strokeWidth="1.700" /></Ic>
              </button>
              <div className="grid grid-cols-[72px_72px] gap-x-1.5 gap-y-[7px]">
                <Field id="pw" label="W" value="2024 px" />
                <Field id="px" label="X" value="-64.5 px" />
                <Field id="ph" label="H" value="1004 px" />
                <Field id="py" label="Y" value="-46.5 px" />
              </div>
            </div>
            <div className="mt-[11px] flex items-center pl-[34px]">
              <Ic s={14}><path d="M19 16H2L15 4M9 9c3 1 4 4 4 7" strokeWidth="1.700" /></Ic>
              <input aria-label="Angle" defaultValue="0.00°" className="ml-[5px] h-[17px] w-[38px] rounded-l-sm border border-[#666] bg-[#454545] pl-1 text-[#f0f0f0]" />
              <button aria-label="Angle presets" className="flex h-[17px] w-[15px] items-center justify-center rounded-r-sm border border-l-0 border-[#666]"><Chev /></button>
              <button aria-label="Flip horizontal" className="ml-8"><Ic s={16}><path d="M2 4.500v11L7 10z" /><path d="M19 3.500v13L13 10z" fill={C} stroke="none" /><path d="M10 2v16" strokeDasharray="1.500 1.500" /></Ic></button>
              <button aria-label="Flip vertical" className="ml-3"><Ic s={16}><path d="M4.500 2h11L10 7z" /><path d="M3.500 19h13L10 13z" fill={C} stroke="none" /><path d="M2 10h16" strokeDasharray="1.500 1.500" /></Ic></button>
            </div>
          </div>
          <div className="h-36 border-b border-[#434343] pt-2 pl-1.5 text-[#d6d6d6]">
            <div className="flex h-4 items-center"><Heading>Appearance</Heading></div>
            <div className="mt-[10px] grid grid-cols-[44px_1fr] gap-x-[9px] gap-y-2">
              <span className="self-center text-right">Fill</span>
              <button aria-label="Fill color" className="flex h-5 w-[30px] items-center justify-center border border-[#6a6a6a]"><span className="h-[14px] w-6 bg-[#d3d3d3]" /></button>
              <span className="self-center justify-self-center whitespace-nowrap pl-3">Stroke</span>
              <button aria-label="Stroke color" className="flex h-5 w-[30px] items-center justify-center border border-[#6a6a6a]"><span className="flex h-[14px] w-6 items-center justify-center bg-black"><span className="h-[6px] w-4 border border-white bg-[#535353]" /></span></button>
            </div>
            <div className="mt-2 flex items-center pl-[53px]">
              <input aria-label="Stroke width" defaultValue="9 px" className="h-[17px] w-[48px] rounded-l-sm border border-[#666] bg-[#454545] pl-1 text-[#f0f0f0]" />
              <button aria-label="Stroke width presets" className="flex h-[17px] w-[15px] items-center justify-center rounded-r-sm border border-l-0 border-[#666]"><Chev /></button>
              <button aria-label="Stroke type" className="ml-1.5 flex h-[18px] w-16 items-center justify-between rounded-sm border border-[#666] bg-[#454545] px-[3px]"><span className="h-0.5 w-[45px] bg-white" /><Chev /></button>
            </div>
            <div className="mt-2 flex gap-1.5 pl-[54px]">
              <button aria-label="Stroke alignment" className="flex h-[15px] w-10 items-center justify-between rounded-sm border border-[#666] bg-[#454545] pr-[3px] pl-2">
                <svg width="14" height="14" aria-hidden="true"><rect width="14" height="14" fill={C} /><path d="M2.500 2.500h9v9h-9z" fill="none" stroke="#111" /><path d="M1 1h3v3H1zM10 1h3v3h-3zM1 10h3v3H1zM10 10h3v3h-3z" fill="#111" /><rect x="5" y="5" width="4" height="4" fill="#555" /></svg>
                <Chev />
              </button>
              <button aria-label="Stroke cap" className="flex h-[15px] w-10 items-center justify-between rounded-sm border border-[#666] bg-[#454545] pr-[3px] pl-[10px]">
                <svg width="10" height="11" aria-hidden="true"><path d="M2 0h8v11H2V8H0V3h2z" fill={C} /><path d="M1.500 4h3v3h-3zM4 5h6v1H4z" fill="#111" /></svg>
                <Chev />
              </button>
              <button aria-label="Stroke corners" className="flex h-[15px] w-10 items-center justify-between rounded-sm border border-[#666] bg-[#454545] pr-[3px] pl-[9px]">
                <svg width="12" height="12" aria-hidden="true"><path d="M0 0h12v8H8v4H0z" fill={C} /><path d="M4 4h3.500v3H4zM7 5h5v1H7zM5 7h1v5H5z" fill="#111" /></svg>
                <Chev />
              </button>
            </div>
          </div>
          <div className="pt-2 pl-1.5">
            <div className="flex h-4 items-center"><Heading>Pathfinder</Heading></div>
            <div className="mt-2 ml-4 flex h-6 w-[132px] divide-x divide-[#606060] rounded-sm border border-[#606060] bg-[#474747]">
              <button aria-label="Unite" className="flex flex-1 items-center justify-center bg-[#383838]"><Ic s={16}><path d="M1 1h11v5h7v13H7v-5H1z" fill={C} stroke="none" /></Ic></button>
              <button aria-label="Subtract" className="flex flex-1 items-center justify-center"><Ic s={16}><path d="M2 2h10v5H8v6H2z" fill={C} stroke="none" /><path d="M9 8h9v10H9z" strokeWidth="1.500" /></Ic></button>
              <button aria-label="Intersect" className="flex flex-1 items-center justify-center"><Ic s={16}><path d="M2 2h11v11H2zM7 7h11v11H7z" strokeWidth="1.500" /><path d="M7.500 7.500h5v5h-5z" fill={C} stroke="none" /></Ic></button>
              <button aria-label="Exclude" className="flex flex-1 items-center justify-center"><Ic s={16}><path d="M1 1h11v5h7v13H7v-5H1z" fill={C} stroke="none" /><path d="M7.500 7.500h5v5h-5z" fill="#444" stroke="none" /></Ic></button>
            </div>
          </div>
        </div>
        <div className="w-4 bg-[#4b4b4b]" />
      </div>
    </section>
  );
}

/* ---------- taskbar ---------- */

function AppTile({ bg, fg, children }: Kids & { bg: string; fg: string }) {
  return <span className={"flex size-[22px] items-center justify-center rounded-[4px] text-[11px] font-semibold " + bg + " " + fg}>{children}</span>;
}

function Firefox() {
  return (
    <svg width="24" height="24" viewBox="0 0 24 24" aria-hidden="true">
      <defs><linearGradient id="ff" x1="1" y1="0" x2=".2" y2="1"><stop stopColor="#ffe226" /><stop offset=".45" stopColor="#ff8a16" /><stop offset="1" stopColor="#f5156c" /></linearGradient></defs>
      <path d="M14 0c2.500 2 3.500 4 4 6 1-.3 1.300-1 1.500-1.800C22 7 23.500 10 23 14c-.8 6-5.500 9.500-11 9.500S1 19 1 13c0-3 1-5.500 2.500-7.500 0 1 .3 1.500.8 2C5 5.500 6.500 4 8 3.500c-.3 1.200.2 2.300 1 3 2.500-1 4.500-3 5-6.500z" fill="url(#ff)" />
      <circle cx="12" cy="14" r="5.200" fill="#7a3bd6" /><path d="M5 11c2-2 5-1.500 7-.5-1 2-2.500 2-4 2.200-.8 1.800.5 4.300 3 5-4 .5-6.500-2.700-6-6.700z" fill="#ff9a1f" />
    </svg>
  );
}

function Edge() {
  return (
    <svg width="24" height="24" viewBox="0 0 24 24" aria-hidden="true">
      <defs><linearGradient id="ed" x1="0" y1="0" x2="1" y2=".3"><stop stopColor="#1f9de0" /><stop offset=".6" stopColor="#35c1d8" /><stop offset="1" stopColor="#6be06a" /></linearGradient></defs>
      <path d="M0 11.500C.6 5 5.500 0 12 0c7 0 12 5 12 10.500 0 4-3 6-6.500 6-2.500 0-4-1-3-2.300 1.700-2.200.2-6.700-4.500-6.700C5.500 7.500 1.500 9 0 11.500z" fill="url(#ed)" />
      <path d="M0 11.500C2 8 6 7 9.500 7.600 6.500 9 6 13 7.500 16c2 4 7 6 13 3.500-2 2.800-5 4.500-8.500 4.500C5 24 0 18.500 0 11.500z" fill="#1464b8" />
    </svg>
  );
}

function OfficeTile({ c, l }: { c: string; l: string }) {
  return (
    <svg width="24" height="24" viewBox="0 0 24 24" aria-hidden="true">
      <path d="M12 3h11v18H12z" fill="#fff" /><path d="M14 6h7M14 9h7M14 12h7M14 15h7M14 18h7" stroke={c} strokeWidth="1.500" />
      <path d="M1 3l13-3v24L1 21z" fill={c} />
      <text x="7.500" y="16" textAnchor="middle" fill="#fff" fontSize="10" fontWeight="700">{l}</text>
    </svg>
  );
}

function Chrome() {
  return (
    <svg width="26" height="26" viewBox="0 0 26 26" aria-hidden="true">
      <circle cx="12.500" cy="12.500" r="12" fill="#fbc116" />
      <path d="M2 6.500a12 12 0 0121 0H12.500L7.500 15z" fill="#e33b2e" />
      <path d="M2 6.500a12 12 0 009.500 18l5-9-9-.5z" fill="#2da94f" />
      <circle cx="12.500" cy="12" r="5.800" fill="#fff" /><circle cx="12.500" cy="12" r="4.600" fill="#2a7de1" />
      <circle cx="18.500" cy="18.500" r="7" fill="#3a2d28" /><circle cx="18.500" cy="19" r="4" fill="#c79f8c" /><path d="M13.500 16.500c3-4 8-3 10 1-3-1-7 0-10-1z" fill="#5b4034" />
    </svg>
  );
}

const calendarRays = Array.from({ length: 12 }, (_, i) => i * 30);

function SearchArt() {
  return (
    <svg width="70" height="36" viewBox="0 0 70 36" aria-hidden="true" className="shrink-0">
      <g stroke="#e88a63">{calendarRays.map((a) => <path key={a} d="M9 10V3" transform={`rotate(${a} 9 13)`} strokeDasharray="3 1" />)}</g>
      <g stroke="#f0a040">{calendarRays.map((a) => <path key={a} d="M62 12V8" transform={`rotate(${a} 62 16)`} />)}</g>
      <circle cx="62" cy="16" r="3.500" fill="#f5b040" />
      <path d="M46 7l7 3 1 20-6 1z" fill="#8e96a0" />
      <path d="M21 6l29 1-2 25-29-3z" fill="#eef0f4" />
      <path d="M21 5l29 1.500-.5 9L20 12z" fill="#d8362f" />
      <path d="M22 16l26 2M21.500 20l26 2M21 24l26 2M20.500 28l26 2M25 15l-1 13M30 15l-1 14M35 16l-1 14M40 16l-1 14M45 17l-1 14" stroke="#58606c" strokeWidth=".9" />
      <path d="M26 8c-2-6 3-8 3-3M35 8c-2-6 3-8 3-3M44 9c-2-6 3-8 3-3" fill="none" stroke="#9aa2ac" strokeWidth="1.400" />
    </svg>
  );
}

const W = "#f2f2f2";

const tray: { n: string; d: React.ReactNode }[] = [
  { n: "Discord", d: <FaDiscord className="size-[14px] text-white" /> },
  { n: "Butterfly", d: <svg width="16" height="16" viewBox="0 0 16 16"><path d="M1 2l7 5 7-5-2 7-3 .5L14 14 8 9l-6 5 4-4.500L3 9z" fill="#5aa9e6" /></svg> },
  { n: "NVIDIA", d: <svg width="16" height="16" viewBox="0 0 16 16"><rect width="16" height="16" fill="#111" /><path d="M1.500 7.500C5 3 9 3 12 7c-3 4-7 4-10.500.500z M5 7.500c1.500-2 3.500-2 5 0" fill="none" stroke="#76b900" strokeWidth="1.500" /><circle cx="12" cy="11.500" r="3.600" fill="#111" stroke="#fff" /><path d="M10.500 11.500h3M12 10v3" stroke="#fff" /></svg> },
  { n: "AnyDesk", d: <svg width="16" height="16" viewBox="0 0 16 16"><rect width="16" height="16" fill="#ef443b" /><path d="M6 5l3 3-3 3-3-3z" fill="#fff" /><path d="M9 5l3.500 3L9 11" fill="none" stroke="#fff" strokeWidth="1.300" /></svg> },
  { n: "H", d: <svg width="16" height="16" viewBox="0 0 16 16"><rect width="16" height="16" rx="2" fill="#3e8f4e" /><path d="M4.500 3v10M11.500 3v10M4.500 8h7" stroke="#fff" strokeWidth="2.400" /></svg> },
  { n: "Security", d: <svg width="16" height="16" viewBox="0 0 16 16"><path d="M7 0l6.500 2v5c0 4-3 7-6.500 8C3.500 14 .5 11 .5 7V2z" fill="#fff" /><path d="M7 1v13M1 7h12" stroke="#1e2d39" strokeWidth="1.500" /><path d="M11 7l5 9H6z" fill="#f5b21a" /><path d="M11 10v3M11 14v1" stroke="#222" strokeWidth="1.200" /></svg> },
  { n: "D", d: <svg width="16" height="16" viewBox="0 0 16 16"><rect width="16" height="16" fill="#3fa0ea" /><path d="M3 4h5a4 4 0 010 8.500H3M3 8.200h4" fill="none" stroke="#fff" strokeWidth="2" /></svg> },
  { n: "Snagit", d: <svg width="16" height="16" viewBox="0 0 16 16"><rect width="16" height="16" fill="#ef5b48" /><path d="M12 4H4.500v4h7v4.500H4" fill="none" stroke="#fff" strokeWidth="2.300" /></svg> },
  { n: "Dropbox", d: <span className="relative"><FaDropbox className="size-4 text-white" /><svg width="9" height="9" viewBox="0 0 9 9" className="absolute -right-1 -bottom-1"><circle cx="4.500" cy="4.500" r="4.500" fill="#c8142a" /><path d="M3 3l3 3M6 3L3 6" stroke="#fff" /></svg></span> },
  { n: "Malwarebytes", d: <svg width="16" height="16" viewBox="0 0 16 16"><path d="M2.500 13.500V7c0-4 2.500-4 3.500-1.500L8 10l2-4.500c1-2.500 3.500-2.500 3.500 1.500v6.500" fill="none" stroke="#1746c8" strokeWidth="3.200" /></svg> },
  { n: "Creative Cloud", d: <svg width="16" height="16" viewBox="0 0 16 16"><path d="M4.500 10.500a3.500 3.500 0 110-6c2-2 7-2 8 2.500M8 8.500a2 2 0 11-3-2.500" fill="none" stroke={W} strokeWidth="1.400" /><path d="M10.500 5.500l5 9h-10z" fill="#d9601a" /><path d="M10.500 8.500v3M10.500 12.500v1" stroke="#fff" strokeWidth="1.200" /></svg> },
  { n: "Eject USB", d: <svg width="16" height="18" viewBox="0 0 16 18" fill="none" stroke={W}><path d="M4.500 6V.5h6V6M6.500 3h.7M8.300 3H9M3 6h9v5.500M3 6v8.500c0 1.500 1 2 2 2h3M9.500 14.500l2 2.500 4-4.500" /></svg> },
  { n: "Camera", d: <svg width="16" height="18" viewBox="0 0 16 18" fill="none" stroke={W}><rect x="3" y="5.500" width="8" height="7" rx="1.500" /><circle cx="7" cy="9" r="1.500" /><path d="M11 8l2.500-1.500v5L11 10M3.500 2.500c2-1.700 6-1.700 8 0M3.500 15.500c2 1.700 6 1.700 8 0" /></svg> },
  { n: "Satellite", d: <svg width="16" height="16" viewBox="0 0 16 16"><path d="M2 0c6 1 13 6 13 13-2 1.500-4 1-6-.5C5 9.500 2 5 2 0z" fill="#1a1a1a" stroke={W} /><path d="M5 9.500L4 13l4 1.500" stroke={W} fill="none" strokeWidth="2" /></svg> },
  { n: "Globe", d: <svg width="16" height="16" viewBox="0 0 16 16"><path d="M0 5l6-3 6 2v8l-6 2-6-3z" fill="#8fd0f0" /><circle cx="11" cy="8" r="5" fill="#2a8fd8" /><path d="M11 3v10M6 8h10" stroke="#d5efff" /></svg> },
  { n: "Device offline", d: <svg width="16" height="16" viewBox="0 0 16 16"><path d="M0 1l10 3 3 5-4 2z" fill="#777f88" /><circle cx="11.500" cy="11" r="4.500" fill="#d3202e" /><path d="M9.700 9.200l3.600 3.600M13.300 9.200l-3.600 3.600" stroke="#fff" strokeWidth="1.300" /></svg> },
  { n: "Network", d: <svg width="16" height="16" viewBox="0 0 16 16" fill="none" stroke={W}><path d="M4.500 3.500h11v8h-11M8 14.500h6M11 12v2.500M.5 1.500h4v4h-4zM2.500 5.500V13h2" /></svg> },
  { n: "Volume", d: <svg width="16" height="16" viewBox="0 0 16 16" fill="none" stroke={W}><path d="M.5 6h2l3-3v10l-3-3h-2zM8 6c1 1 1 3 0 4" /><path d="M10 4c2 2 2 6 0 8M12.500 2.500c3 3 3 8 0 11" opacity=".6" /></svg> },
  { n: "Armoury", d: <svg width="16" height="16" viewBox="0 0 16 16"><rect width="16" height="16" fill="#333" /><path d="M2 12l7-8h5l-2 8H9l1-4-4 4z" fill="#ddd" /></svg> },
  { n: "Zip", d: <svg width="16" height="16" viewBox="0 0 16 16"><rect x="3" width="13" height="11" fill="#2d7fd6" /><path d="M1 1h4l1 1h6v9H1z" fill="#f7d254" stroke="#fff" strokeWidth=".7" /><path d="M5 14h9V9" fill="none" stroke="#4aa3f0" strokeWidth="2" /></svg> },
  { n: "Bluetooth", d: <span className="flex h-4 w-3 items-center justify-center rounded-full bg-[#0a84e8]"><FaBluetoothB className="size-3 text-white" /></span> },
];

function Taskbar() {
  return (
    <footer className="flex h-10 shrink-0 items-stretch bg-[#1d2c39] text-[12px] text-white">
      <button aria-label="Start" className="flex w-12 items-center justify-center">
        <svg width="16" height="16" viewBox="0 0 16 16" fill="#fff" aria-hidden="true"><path d="M0 2.300l6.700-1v6.200H0zM7.500 1.200L16 0v7.500H7.500zM0 8.400h6.700v6.200L0 13.700zM7.500 8.400H16V16l-8.500-1.200z" /></svg>
      </button>
      <div className="flex w-[288px] items-center bg-[#f2f2f2] pr-[5px] pl-3">
        <svg width="17" height="17" viewBox="0 0 17 17" fill="none" stroke="#222" strokeWidth="1.300" className="shrink-0" aria-hidden="true"><circle cx="10.500" cy="6" r="5" /><path d="M7 9.500L1 16" /></svg>
        <input aria-label="Search" placeholder="Type here to search" className="ml-3 w-0 flex-1 bg-transparent text-[14px] placeholder:text-[#3a3a3a]" />
        <SearchArt />
      </div>
      {[
        { n: "Task View", d: <svg width="18" height="18" viewBox="0 0 18 18" fill="none" stroke="#fff" strokeWidth="1.200"><path d="M1.500 5.500h10v7h-10zM1 1v1.500h11V1M1 17v-1.500h11V17M15.500 1v3M15.500 8.500V17" /><path d="M14.500 5h2v2h-2z" fill="#fff" stroke="none" /></svg> },
        { n: "Firefox", d: <Firefox /> },
        { n: "Edge", d: <Edge /> },
        { n: "Word", d: <OfficeTile c="#2b579a" l="W" /> },
        { n: "Excel", d: <OfficeTile c="#1e7145" l="X" /> },
        { n: "Snagit", d: <svg width="24" height="24" viewBox="0 0 24 24"><rect width="24" height="24" rx="2" fill="#f05a46" /><path d="M18.500 6H7v5.500h10V18H5.500" fill="none" stroke="#fff" strokeWidth="3.500" strokeLinejoin="round" /></svg> },
        { n: "Acrobat", d: <svg width="22" height="22" viewBox="0 0 22 22"><rect width="22" height="22" rx="4" fill="#b30b00" /><path d="M4 16.500c-1-2 7-5 13.500-3.500.5 2-4-.5-6-3.500-1.500-2.500-2-6-.7-6s.7 4-1.300 7.500-4.500 7-5.500 5.500z" fill="none" stroke="#fff" strokeWidth="1.400" /></svg> },
        { n: "Lightroom Classic", d: <AppTile bg="bg-[#001e36]" fg="text-[#31a8ff]">Lrc</AppTile> },
        { n: "Lightroom", d: <AppTile bg="bg-[#001e36]" fg="text-[#31a8ff]">Lr</AppTile> },
        { n: "Chrome", d: <Chrome /> },
      ].map((a) => (
        <button key={a.n} aria-label={a.n} className="flex w-[49px] shrink-0 items-center justify-center pl-px">{a.d}</button>
      ))}
      <button className="ml-[6px] flex w-[152px] shrink-0 items-center gap-1.5 border-b-2 border-[#76b9ed] pl-2 whitespace-nowrap">
        <svg width="22" height="24" viewBox="0 0 22 24" aria-hidden="true"><path d="M2 3l6-1v20l-6-1z" fill="#f9dc84" /><path d="M5 4l9-1v8l3 3-1 7H6z" fill="#f3cd63" /><path d="M13 0l5 2-2 4-4-2zM17 7l5 3-3 2-2-2z" fill="#2b8fdc" /></svg>
        D:\4-Writing and E...
      </button>
      <button className="ml-[5px] flex w-[160px] shrink-0 items-center gap-[5px] border-b-2 border-[#76b9ed] bg-[#4b5762] pl-[11px] whitespace-nowrap">
        <AppTile bg="bg-[#001e36]" fg="text-[#31a8ff]">Ps</AppTile>
        Untitled-1 @ 66.7%...
      </button>
      <div className="ml-auto flex items-center">
        <button className="text-[#e6e6e6]">Desktop</button>
        <button aria-label="Show more" className="mt-1.5 ml-1.5 self-start"><svg width="8" height="7" viewBox="0 0 8 7" fill="none" stroke="#fff" aria-hidden="true"><path d="M.5.500l3 3-3 3M4.500.500l3 3-3 3" /></svg></button>
        <div className="ml-[5px] flex">
          {tray.map((t) => (
            <button key={t.n} aria-label={t.n} className="flex h-6 w-6 items-center justify-center">{t.d}</button>
          ))}
        </div>
        <button className="w-[63px] text-center text-[12px] leading-[18px] whitespace-nowrap"><span className="block">4:43 PM</span><span className="block">28-Dec-23</span></button>
        <button aria-label="1 new notification" className="relative mr-[14px] ml-3 flex h-6 w-6 items-center justify-center">
          <svg width="18" height="18" viewBox="0 0 18 18" className="mr-1 mb-1" aria-hidden="true"><path d="M0 0h17v13H8l-3.500 4v-4H0z" fill="#fff" /><path d="M3 3.500h11M3 6.500h11M3 9.500h8" stroke="#1d2c39" strokeWidth="1.200" /></svg>
          <span className="absolute -right-0.5 -bottom-1 flex size-4 items-center justify-center rounded-full border border-[#aaa] bg-[#333c45] text-[11px] leading-none">1</span>
        </button>
        <div className="mr-1 h-10 w-px bg-[#50606c]" />
      </div>
    </footer>
  );
}

export default function App() {
  return (
    <div className="flex h-screen flex-col overflow-hidden bg-[#535353] font-['Open_Sans','Noto_Sans',sans-serif]">
      <MenuBar />
      <OptionsBar />
      <div className="flex min-h-0 flex-1 border-x-4 border-[#535353] pb-1">
        <div className="flex min-h-0 min-w-0 flex-1 border-x border-b border-[#3a3a3a]">
          <Toolbar />
          <Workspace />
          <div className="flex w-[248px] shrink-0 flex-col border-l-[3px] border-[#3a3a3a]">
            <div className="flex h-[11px] shrink-0 items-center justify-end bg-[#424242] pr-1.5">
              <svg width="8" height="7" viewBox="0 0 8 7" fill="none" stroke="#ddd" aria-hidden="true"><path d="M.5.500l3 3-3 3M4.500.500l3 3-3 3" /></svg>
            </div>
            <LayersPanel />
            <PropertiesPanel />
          </div>
        </div>
      </div>
      <Taskbar />
    </div>
  );
}
